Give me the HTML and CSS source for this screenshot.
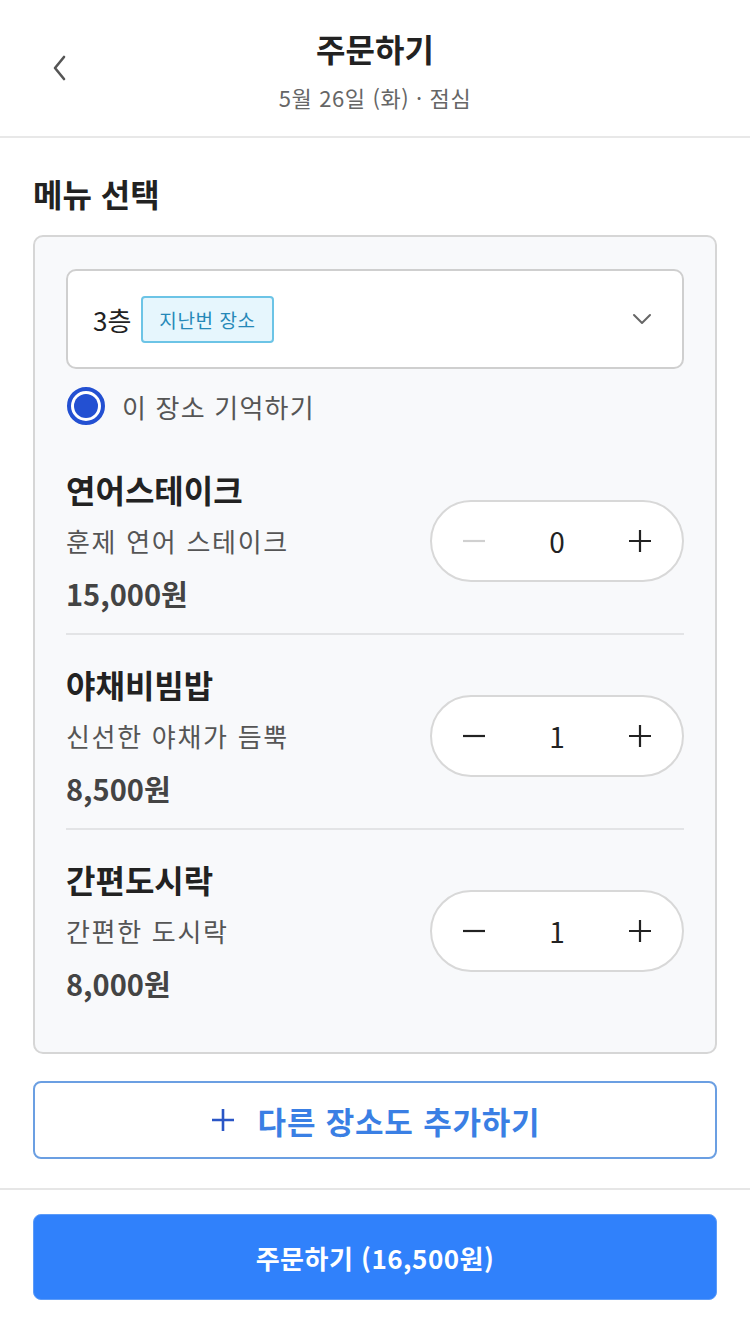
FILE: index.html
```html
<!DOCTYPE html>
<html lang="ko">
<head>
    <meta charset="UTF-8">
    <meta name="viewport" content="width=device-width, initial-scale=1.0">
    <title>주문하기</title>
    <link rel="stylesheet" href="styles.css">
</head>
<body>
    <header class="header">
        <button class="back-btn" aria-label="뒤로">
            <svg width="20" height="28" viewBox="0 0 20 28"><path d="M14 3 L5 14 L14 25" fill="none" stroke="#555" stroke-width="2.6" stroke-linecap="round" stroke-linejoin="round"/></svg>
        </button>
        <div class="header-text">
            <h1 class="title">주문하기</h1>
            <p class="subtitle">5월 26일 (화) · 점심</p>
        </div>
        <div></div>
    </header>

    <main class="content">
        <h2 class="section-title">메뉴 선택</h2>

        <div class="card">
            <div class="select">
                <div class="select-value">
                    <span class="floor">3층</span>
                    <span class="badge">지난번 장소</span>
                </div>
                <svg width="20" height="12" viewBox="0 0 20 12"><path d="M2 2 L10 10 L18 2" fill="none" stroke="#666" stroke-width="2" stroke-linecap="round" stroke-linejoin="round"/></svg>
            </div>

            <label class="remember">
                <span class="radio"><span class="radio-dot"></span></span>
                <span class="remember-text">이 장소 기억하기</span>
            </label>

            <div class="menu-list">
                <div class="menu-item">
                    <div class="menu-info">
                        <div class="menu-name">연어스테이크</div>
                        <div class="menu-desc">훈제 연어 스테이크</div>
                        <div class="menu-price">15,000원</div>
                    </div>
                    <div class="stepper">
                        <span class="step-btn disabled">
                            <svg width="26" height="26" viewBox="0 0 26 26"><path d="M2 13 H24" stroke="currentColor" stroke-width="2.2"/></svg>
                        </span>
                        <span class="step-value">0</span>
                        <span class="step-btn">
                            <svg width="26" height="26" viewBox="0 0 26 26"><path d="M2 13 H24 M13 2 V24" stroke="currentColor" stroke-width="2.2"/></svg>
                        </span>
                    </div>
                </div>

                <div class="menu-item">
                    <div class="menu-info">
                        <div class="menu-name">야채비빔밥</div>
                        <div class="menu-desc">신선한 야채가 듬뿍</div>
                        <div class="menu-price">8,500원</div>
                    </div>
                    <div class="stepper">
                        <span class="step-btn">
                            <svg width="26" height="26" viewBox="0 0 26 26"><path d="M2 13 H24" stroke="currentColor" stroke-width="2.2"/></svg>
                        </span>
                        <span class="step-value">1</span>
                        <span class="step-btn">
                            <svg width="26" height="26" viewBox="0 0 26 26"><path d="M2 13 H24 M13 2 V24" stroke="currentColor" stroke-width="2.2"/></svg>
                        </span>
                    </div>
                </div>

                <div class="menu-item">
                    <div class="menu-info">
                        <div class="menu-name">간편도시락</div>
                        <div class="menu-desc">간편한 도시락</div>
                        <div class="menu-price">8,000원</div>
                    </div>
                    <div class="stepper">
                        <span class="step-btn">
                            <svg width="26" height="26" viewBox="0 0 26 26"><path d="M2 13 H24" stroke="currentColor" stroke-width="2.2"/></svg>
                        </span>
                        <span class="step-value">1</span>
                        <span class="step-btn">
                            <svg width="26" height="26" viewBox="0 0 26 26"><path d="M2 13 H24 M13 2 V24" stroke="currentColor" stroke-width="2.2"/></svg>
                        </span>
                    </div>
                </div>
            </div>
        </div>

        <button class="add-btn">
            <svg width="26" height="26" viewBox="0 0 26 26"><path d="M2 13 H24 M13 2 V24" stroke="#2a56c6" stroke-width="2.6"/></svg>
            <span>다른 장소도 추가하기</span>
        </button>
    </main>

    <footer class="footer">
        <button class="order-btn">주문하기 (16,500원)</button>
    </footer>
</body>
</html>
```

FILE: styles.css
```css
* {
    box-sizing: border-box;
}
body {
    margin: 0;
    width: 750px;
    background: #fff;
    font-family: "Noto Sans CJK KR", "Noto Sans", sans-serif;
    color: #222;
}
button {
    font-family: inherit;
    cursor: pointer;
}

.header {
    display: grid;
    grid-template-columns: 1fr auto 1fr;
    align-items: center;
    padding: 28px 0 24px;
    border-bottom: 2px solid #e8e8e8;
}
.back-btn {
    justify-self: start;
    margin-left: 50px;
    margin-top: -4px;
    background: none;
    border: none;
    padding: 0;
    display: flex;
}
.header-text {
    text-align: center;
}
.title {
    margin: 0;
    font-size: 32px;
    line-height: 40px;
    font-weight: 700;
    color: #222;
}
.subtitle {
    margin: 14px 0 0;
    font-size: 22px;
    line-height: 30px;
    letter-spacing: 0.6px;
    color: #666;
}

.content {
    padding: 0 33px;
}
.section-title {
    margin: 35px 0 22px;
    font-size: 32px;
    line-height: 40px;
    font-weight: 700;
}

.card {
    background: #f8f9fb;
    border: 2px solid #d6d6d6;
    border-radius: 10px;
    padding: 32px 31px 29px;
}
.select {
    height: 100px;
    background: #fff;
    border: 2px solid #cfcfcf;
    border-radius: 10px;
    display: flex;
    align-items: center;
    justify-content: space-between;
    padding: 0 30px 0 25px;
}
.select-value {
    display: flex;
    align-items: center;
    gap: 10px;
}
.floor {
    font-size: 26px;
    color: #222;
}
.badge {
    display: inline-flex;
    align-items: center;
    height: 47px;
    padding: 0 16px;
    background: #e6f6fd;
    border: 2px solid #6cc4e6;
    border-radius: 4px;
    color: #2588b8;
    font-size: 19px;
    letter-spacing: 0.6px;
}

.remember {
    display: flex;
    align-items: center;
    gap: 17px;
    height: 40px;
    margin-top: 17px;
}
.radio {
    width: 38px;
    height: 38px;
    border: 4px solid #2350d2;
    border-radius: 50%;
    background: #fff;
    display: flex;
    align-items: center;
    justify-content: center;
    margin-left: 1px;
}
.radio-dot {
    width: 24px;
    height: 24px;
    border-radius: 50%;
    background: #2350d2;
}
.remember-text {
    font-size: 26px;
    letter-spacing: 1.2px;
    color: #555;
}

.menu-list {
    margin-top: 14px;
}
.menu-item {
    display: flex;
    align-items: center;
    justify-content: space-between;
    padding: 29px 0 20px;
    border-bottom: 2px solid #e3e4e6;
}
.menu-item:last-child {
    border-bottom: none;
}
.menu-name {
    font-size: 32px;
    line-height: 40px;
    font-weight: 700;
    color: #222;
}
.menu-desc {
    margin-top: 12px;
    font-size: 26px;
    line-height: 40px;
    letter-spacing: 1.7px;
    color: #555;
}
.menu-price {
    margin-top: 12px;
    font-size: 29px;
    line-height: 40px;
    font-weight: 600;
    color: #444;
}

.stepper {
    width: 254px;
    height: 82px;
    background: #fff;
    border: 2px solid #d8d8d8;
    border-radius: 41px;
    display: grid;
    grid-template-columns: repeat(3, 1fr);
    align-items: center;
    justify-items: center;
}
.step-btn {
    display: flex;
    color: #222;
}
.step-btn.disabled {
    color: #d0d0d0;
}
.step-value {
    font-size: 28px;
    color: #222;
}

.add-btn {
    width: 100%;
    height: 78px;
    margin-top: 27px;
    background: #fff;
    border: 2px solid #6b9fe2;
    border-radius: 8px;
    display: flex;
    align-items: center;
    justify-content: center;
    gap: 22px;
    color: #3a7fe4;
    font-size: 31px;
    letter-spacing: 0.8px;
    font-weight: 700;
}

.footer {
    margin-top: 29px;
    border-top: 2px solid #e6e6e6;
    padding: 24px 33px;
}
.order-btn {
    width: 100%;
    height: 86px;
    background: #3081fb;
    border: 1px solid #5d9cf8;
    border-radius: 8px;
    color: #fff;
    font-size: 26px;
    letter-spacing: 0.5px;
    font-weight: 700;
}
```
